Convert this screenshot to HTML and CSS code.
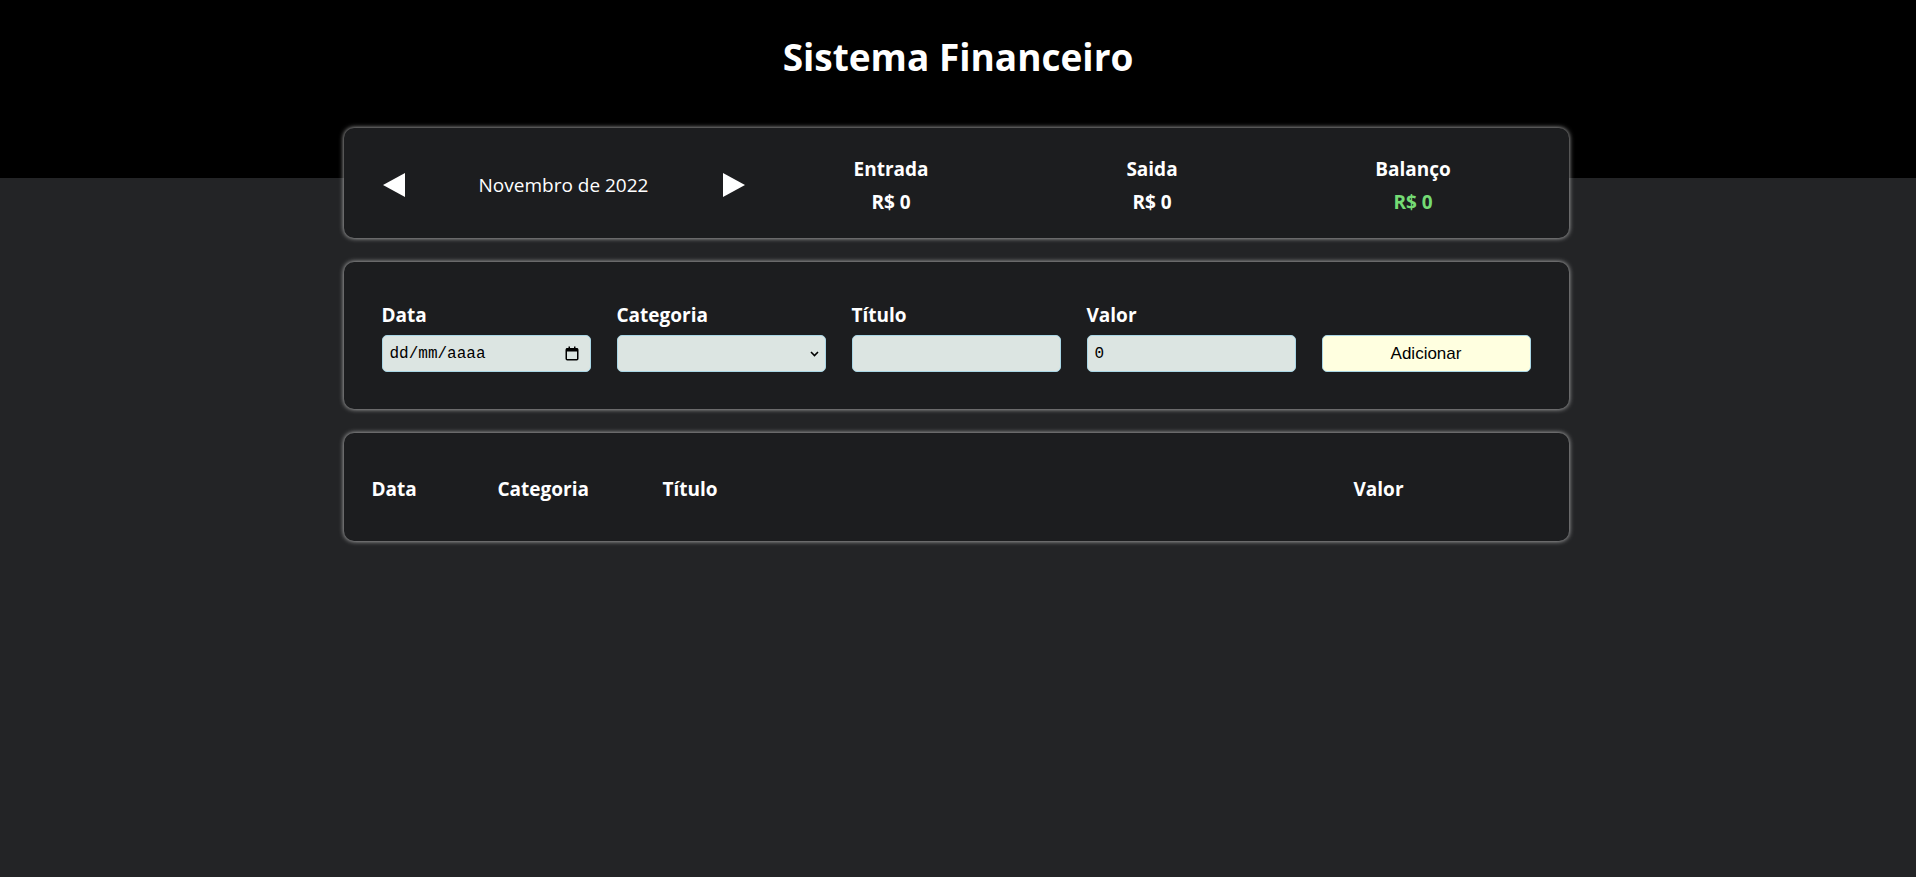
FILE: index.html
```html
<!DOCTYPE html>
<html lang="pt-BR">
<head>
<meta charset="utf-8">
<title>Sistema Financeiro</title>
<link rel="stylesheet" href="styles.css">
</head>
<body>
<header class="header">
  <h1 class="title">Sistema Financeiro</h1>
</header>
<main class="container">
  <section class="card info">
    <div class="month">
      <button class="arrow" type="button" aria-label="Mês anterior">
        <svg width="22" height="24" viewBox="0 0 22 24"><polygon points="0,12 22,0 22,24" fill="#fff"/></svg>
      </button>
      <div class="month-title">Novembro de 2022</div>
      <button class="arrow" type="button" aria-label="Próximo mês">
        <svg width="22" height="24" viewBox="0 0 22 24"><polygon points="0,0 22,12 0,24" fill="#fff"/></svg>
      </button>
    </div>
    <div class="resume">
      <div class="resume-item">
        <div class="resume-label">Entrada</div>
        <div class="resume-value">R$ 0</div>
      </div>
      <div class="resume-item">
        <div class="resume-label">Saida</div>
        <div class="resume-value">R$ 0</div>
      </div>
      <div class="resume-item">
        <div class="resume-label">Balanço</div>
        <div class="resume-value positive">R$ 0</div>
      </div>
    </div>
  </section>

  <section class="card form">
    <div class="field">
      <div class="field-label">Data</div>
      <div class="input">
        <span class="input-text">dd/mm/aaaa</span>
        <svg class="cal-icon" width="14" height="15" viewBox="0 0 14 15">
          <rect x="1.25" y="2.75" width="11.5" height="11" rx="1" fill="none" stroke="#000" stroke-width="1.5"/>
          <rect x="1" y="2.5" width="12" height="3" fill="#000"/>
          <rect x="3.5" y="0.5" width="1.5" height="2.5" fill="#000"/>
          <rect x="9" y="0.5" width="1.5" height="2.5" fill="#000"/>
        </svg>
      </div>
    </div>
    <div class="field">
      <div class="field-label">Categoria</div>
      <div class="input select">
        <span class="input-text"></span>
        <svg class="chevron" width="9" height="6" viewBox="0 0 9 6"><polyline points="1,1 4.5,4.5 8,1" fill="none" stroke="#000" stroke-width="1.6"/></svg>
      </div>
    </div>
    <div class="field">
      <div class="field-label">Título</div>
      <div class="input"><span class="input-text"></span></div>
    </div>
    <div class="field">
      <div class="field-label">Valor</div>
      <div class="input"><span class="input-text">0</span></div>
    </div>
    <div class="field field-action">
      <button class="add-btn" type="button">Adicionar</button>
    </div>
  </section>

  <section class="card list">
    <table class="table">
      <colgroup>
        <col class="col-date">
        <col class="col-cat">
        <col>
        <col class="col-value">
      </colgroup>
      <thead>
        <tr>
          <th>Data</th>
          <th>Categoria</th>
          <th>Título</th>
          <th>Valor</th>
        </tr>
      </thead>
    </table>
  </section>
</main>
</body>
</html>
```

FILE: styles.css
```css
* {
  box-sizing: border-box;
}

body {
  margin: 0;
  background: #232426;
  color: #fff;
  font-family: "Open Sans", "Noto Sans", sans-serif;
  min-height: 877px;
}

.header {
  background: #000;
  height: 178px;
  padding-top: 31px;
  text-align: center;
}

.title {
  margin: 0;
  font-size: 37px;
  font-weight: 700;
  line-height: normal;
}

.container {
  width: 1225px;
  margin: -50px 0 0 calc((100% - 1229px) / 2);
  display: flex;
  flex-direction: column;
  gap: 24px;
}

.card {
  background: #1c1d1f;
  border-radius: 10px;
  box-shadow: 0 0 5px #cccccc;
}

/* info card */
.info {
  height: 110px;
  display: flex;
  align-items: center;
  padding: 3px 25px 0 39px;
}

.month {
  width: 362px;
  display: flex;
  align-items: center;
  justify-content: space-between;
}

.arrow {
  background: none;
  border: 0;
  padding: 0;
  width: 22px;
  height: 24px;
  display: flex;
  cursor: pointer;
}

.month-title {
  font-size: 19px;
  font-weight: 400;
}

.resume {
  flex: 1;
  margin-left: 16px;
  display: flex;
  padding-top: 2px;
}

.resume-item {
  flex: 1;
  text-align: center;
  font-size: 19px;
  font-weight: 700;
  line-height: 32.7px;
}

.positive {
  color: #74db74;
}

/* form card */
.form {
  display: grid;
  grid-template-columns: repeat(5, 1fr);
  gap: 26px;
  padding: 40px 38px 37px;
}

.field {
  display: flex;
  flex-direction: column;
}

.field-action {
  justify-content: flex-end;
}

.field-label {
  font-size: 19px;
  font-weight: 700;
  line-height: 26px;
  margin-bottom: 7px;
}

.input {
  height: 37px;
  background: #dce5e2;
  border: 1px solid #a9d6e5;
  border-radius: 5px;
  display: flex;
  align-items: center;
  padding: 0 7px;
  color: #000;
  font-family: "Liberation Mono", "DejaVu Sans Mono", monospace;
  font-size: 16px;
}

.input-text {
  flex: 1;
}

.cal-icon {
  margin-right: 4px;
}

.chevron {
  margin-right: -1px;
}

.add-btn {
  height: 37px;
  background: #ffffe0;
  border: 1px solid #a9d6e5;
  border-radius: 5px;
  color: #000;
  font-family: "Liberation Sans", Arial, sans-serif;
  font-size: 17px;
  padding: 0;
  cursor: pointer;
}

/* list card */
.list {
  height: 108px;
  display: flex;
  align-items: center;
  padding: 4px 28px 0;
}

.table {
  width: 100%;
  table-layout: fixed;
  border-collapse: collapse;
}

.col-date {
  width: 126px;
}

.col-cat {
  width: 165px;
}

.col-value {
  width: 187px;
}

.table th {
  text-align: left;
  padding: 0;
  font-size: 19px;
  font-weight: 700;
  line-height: 26px;
}
```
